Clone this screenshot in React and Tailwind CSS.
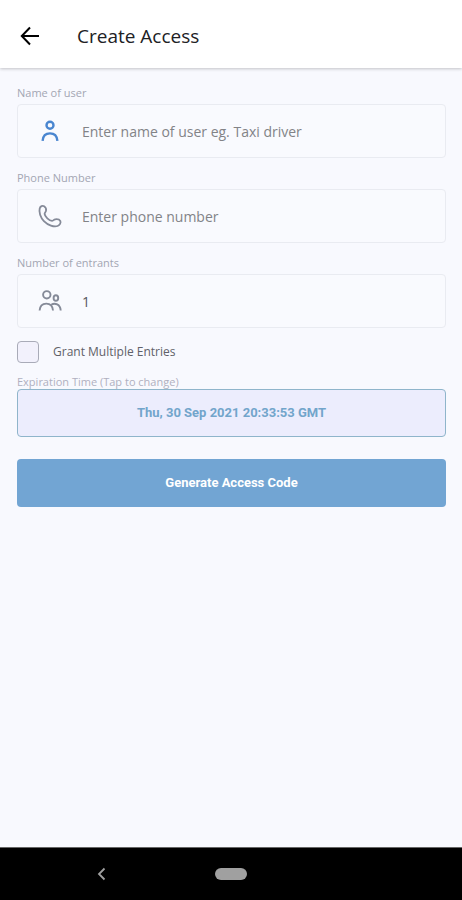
import { useState } from "react";

const UserIcon = () => (
  <svg viewBox="0 0 24 24" className="w-6 h-6 text-[#4a86d0]" fill="none" stroke="currentColor" strokeWidth="2.4">
    <circle cx="12" cy="6.2" r="3.5" />
    <path d="M4.6 21.8c.4-4.6 3.3-7.4 7.4-7.4s7 2.8 7.4 7.4" />
  </svg>
);

const PhoneIcon = () => (
  <svg viewBox="0 0 24 24" className="w-6 h-6 text-[#858a98]" fill="none" stroke="currentColor" strokeWidth="1.8" strokeLinejoin="round">
    <path d="M1.700 4.400C2.300 2.200 4.600 1.300 6.100 2.300c1.500 1 2.300 3 1.900 4.600-.3 1.200-1.500 1.700-1.400 3 .2 2.700 4.600 6.800 7.400 6.900 1.200 0 1.800-1.300 3.200-1.500 2-.3 4.300.3 5.100 1.700.9 1.700-.6 4.200-2.700 5-3.600 1.300-9.700-.8-13.700-4.900C2.400 13.500.7 8 1.700 4.400Z" />
  </svg>
);

const GroupIcon = () => (
  <svg viewBox="0 0 24 24" className="w-6 h-6 text-[#858a98]" fill="none" stroke="currentColor" strokeWidth="1.9">
    <circle cx="8.800" cy="5.800" r="3.700" />
    <ellipse cx="17.900" cy="9" rx="2.300" ry="2.800" />
    <path d="M1.600 21.500c.3-4.400 3-6.900 6.700-6.900s6.400 2.500 6.700 6.900" />
    <path d="M13.200 15.800c3.700-2.300 9.100-.6 9.500 5.700" />
  </svg>
);

const Field = ({ id, label, icon, ...props }) => (
  <div className="mb-[13px]">
    <label htmlFor={id} className="block mb-1 text-[11px] leading-[14px] text-[#a3a6b3]">
      {label}
    </label>
    <div className="flex items-center h-[54px] pl-5 rounded border border-[#e9ebf1] bg-[#f9fafe]">
      {icon}
      <input
        id={id}
        className="flex-1 min-w-0 h-full px-5 text-sm text-[#55565c] placeholder:text-[#828387] bg-transparent outline-none"
        {...props}
      />
    </div>
  </div>
);

const App = () => {
  const [name, setName] = useState("");
  const [phone, setPhone] = useState("");
  const [entrants, setEntrants] = useState("1");
  const [multiple, setMultiple] = useState(false);

  return (
    <div className="min-h-screen flex flex-col bg-[#f8f9fe] font-['Open_Sans',sans-serif]">
      <header className="flex items-center h-[68px] pt-1 px-[18px] bg-white shadow-[0_1px_3px_rgba(0,0,0,0.22)]">
        <button type="button" aria-label="Go back" className="text-black">
          <svg viewBox="0 0 24 24" className="w-6 h-6" fill="none" stroke="currentColor" strokeWidth="2">
            <path d="M21 12H4M12 3.500 3.800 12l8.200 8.500" />
          </svg>
        </button>
        <h1 className="ml-[35px] text-[19px] text-[#202124]">Create Access</h1>
      </header>

      <form className="flex-1 px-4 pt-[18px] pl-[17px]" onSubmit={(e) => e.preventDefault()}>
        <Field
          id="name"
          label="Name of user"
          icon={<UserIcon />}
          placeholder="Enter name of user eg. Taxi driver"
          value={name}
          onChange={(e) => setName(e.target.value)}
        />
        <Field
          id="phone"
          type="tel"
          label="Phone Number"
          icon={<PhoneIcon />}
          placeholder="Enter phone number"
          value={phone}
          onChange={(e) => setPhone(e.target.value)}
        />
        <Field
          id="entrants"
          inputMode="numeric"
          label="Number of entrants"
          icon={<GroupIcon />}
          value={entrants}
          onChange={(e) => setEntrants(e.target.value)}
        />

        <label className="flex items-center w-fit text-xs text-[#606168]">
          <input
            type="checkbox"
            className="appearance-none w-[22px] h-[22px] mr-[14px] rounded-sm border border-[#a9abb8] bg-[#f2f1fc] checked:bg-[#72a5d3]"
            checked={multiple}
            onChange={(e) => setMultiple(e.target.checked)}
          />
          Grant Multiple Entries
        </label>

        <label htmlFor="expiry" className="block mt-3 text-[11px] leading-[14px] text-[#b0b0c0]">
          Expiration Time (Tap to change)
        </label>
        <button
          id="expiry"
          type="button"
          className="w-full h-12 rounded border border-[#8fb5cb] bg-[#ecedfd] font-['Roboto',sans-serif] text-[13px] font-bold text-[#72a5cb]"
        >
          Thu, 30 Sep 2021 20:33:53 GMT
        </button>
        <button
          type="submit"
          className="w-full h-12 mt-[22px] rounded bg-[#72a5d3] font-['Roboto',sans-serif] text-[13px] font-bold text-white"
        >
          Generate Access Code
        </button>
      </form>

      {/* Android navigation bar */}
      <nav className="grid grid-cols-[1fr_32px_1fr] items-center h-[53px] bg-black border-t border-[#666666]">
        <button type="button" aria-label="Back" className="justify-self-center text-[#a0a0a0]">
          <svg viewBox="0 0 12 14" className="w-3 h-3.5 -ml-3" fill="none" stroke="currentColor" strokeWidth="1.800">
            <path d="M8.500 1.500 3 7l5.500 5.500" />
          </svg>
        </button>
        <button type="button" aria-label="Home" className="w-8 h-3 rounded-full bg-[#a0a0a0]" />
      </nav>
    </div>
  );
};

export default App;
